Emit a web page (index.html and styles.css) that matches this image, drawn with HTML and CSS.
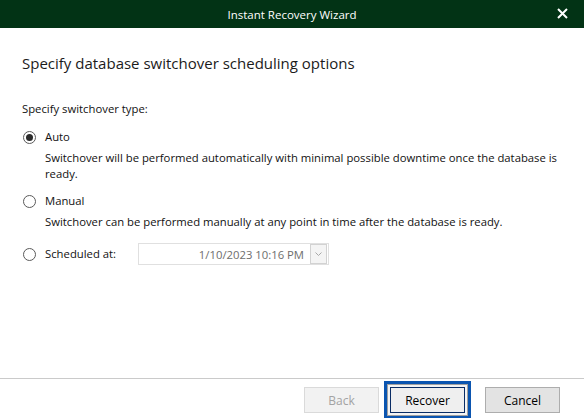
FILE: index.html
```html
<!DOCTYPE html>
<html>
<head>
<meta charset="utf-8">
<link rel="stylesheet" href="styles.css">
</head>
<body>
<div class="window">
  <div class="titlebar">
    <span class="title">Instant Recovery Wizard</span>
    <span class="close">
      <svg width="11" height="11" viewBox="0 0 11 11"><path d="M1 1 L10 10 M10 1 L1 10" stroke="#fff" stroke-width="2"/></svg>
    </span>
  </div>
  <div class="main">
    <h1 class="heading">Specify database switchover scheduling options</h1>
    <div class="group-label">Specify switchover type:</div>
    <div class="option">
      <span class="radio checked"></span>
      <span class="opt-label">Auto</span>
    </div>
    <div class="desc">Switchover will be performed automatically with minimal possible downtime once the database is<br>ready.</div>
    <div class="option opt-manual">
      <span class="radio"></span>
      <span class="opt-label">Manual</span>
    </div>
    <div class="desc">Switchover can be performed manually at any point in time after the database is ready.</div>
    <div class="option opt-sched">
      <span class="radio"></span>
      <span class="opt-label sched-label">Scheduled at:</span>
      <div class="datebox">
        <span class="datetext">1/10/2023 10:16 PM</span>
        <span class="dropbtn">
          <svg width="7" height="4" viewBox="0 0 7 4"><path d="M0.5 0.5 L3.5 3.5 L6.5 0.5" stroke="#a8a8a8" fill="none" stroke-width="1"/></svg>
        </span>
      </div>
    </div>
  </div>
  <div class="footer">
    <button class="btn btn-back" disabled>Back</button>
    <button class="btn btn-recover">Recover</button>
    <button class="btn btn-cancel">Cancel</button>
  </div>
</div>
</body>
</html>
```

FILE: styles.css
```css
html, body {
  margin: 0;
  padding: 0;
  background: #fff;
}
body {
  font-family: "Open Sans", "Noto Sans", sans-serif;
  font-size: 11.3px;
  color: #111;
}
.window {
  width: 584px;
  height: 418px;
  display: flex;
  flex-direction: column;
  overflow: hidden;
}
.titlebar {
  height: 28px;
  background: #023315;
  display: flex;
  align-items: center;
  justify-content: center;
  position: relative;
  flex: none;
}
.title {
  color: #fff;
  font-size: 11.5px;
}
.close {
  position: absolute;
  right: 16px;
  top: 8px;
  width: 11px;
  height: 11px;
  display: flex;
}
.main {
  flex: 1;
  padding: 0 22px;
  display: flex;
  flex-direction: column;
  align-items: flex-start;
}
.heading {
  margin: 25px 0 0 0;
  font-size: 15px;
  font-weight: normal;
  line-height: 20px;
  color: #1b1b1b;
}
.group-label {
  margin-top: 28px;
  line-height: 16px;
}
.option {
  display: flex;
  align-items: center;
  height: 16px;
  margin-top: 12px;
}
.opt-manual {
  margin-top: 11px;
}
.opt-sched {
  height: 22px;
  margin-top: 13px;
}
.radio {
  width: 13px;
  height: 13px;
  border: 1px solid #5a5a5a;
  border-radius: 50%;
  box-sizing: border-box;
  display: flex;
  align-items: center;
  justify-content: center;
  margin-left: 1px;
}
.radio.checked::after {
  content: "";
  width: 7px;
  height: 7px;
  border-radius: 50%;
  background: #2b2b2b;
}
.opt-label {
  margin-left: 9px;
  line-height: 16px;
}
.sched-label {
  width: 93px;
}
.desc {
  margin-top: 5px;
  margin-left: 23px;
  line-height: 16px;
  white-space: nowrap;
}
.datebox {
  width: 191px;
  height: 22px;
  box-sizing: border-box;
  border: 1px solid #e0e0e0;
  display: flex;
  align-items: center;
  justify-content: flex-end;
}
.datetext {
  color: #6e6e6e;
  padding-right: 6px;
}
.dropbtn {
  width: 15px;
  height: 18px;
  border: 1px solid #d2d2d2;
  background: #f4f4f4;
  margin-right: 1px;
  display: flex;
  align-items: center;
  justify-content: center;
}
.footer {
  height: 40px;
  flex: none;
  border-top: 1px solid #cacaca;
  display: flex;
  justify-content: flex-end;
  align-items: flex-start;
  padding: 8px 24px 0 0;
  box-sizing: border-box;
}
.btn {
  width: 75px;
  height: 26px;
  font-family: inherit;
  font-size: 12px;
  box-sizing: border-box;
  padding: 0;
}
.btn-back {
  background: #f2f2f2;
  border: 1px solid #dadada;
  color: #a3a3a3;
}
.btn-recover {
  margin-left: 11px;
  background: #efefef;
  border: 1px solid #0a2c64;
  color: #000;
  box-shadow: 0 0 0 2px #f4f4f4, 0 0 0 3px #a0a0a0, 0 0 0 6px #0b55b0;
}
.btn-cancel {
  margin-left: 20px;
  background: #e3e3e3;
  border: 1px solid #adadad;
  color: #000;
}
```
